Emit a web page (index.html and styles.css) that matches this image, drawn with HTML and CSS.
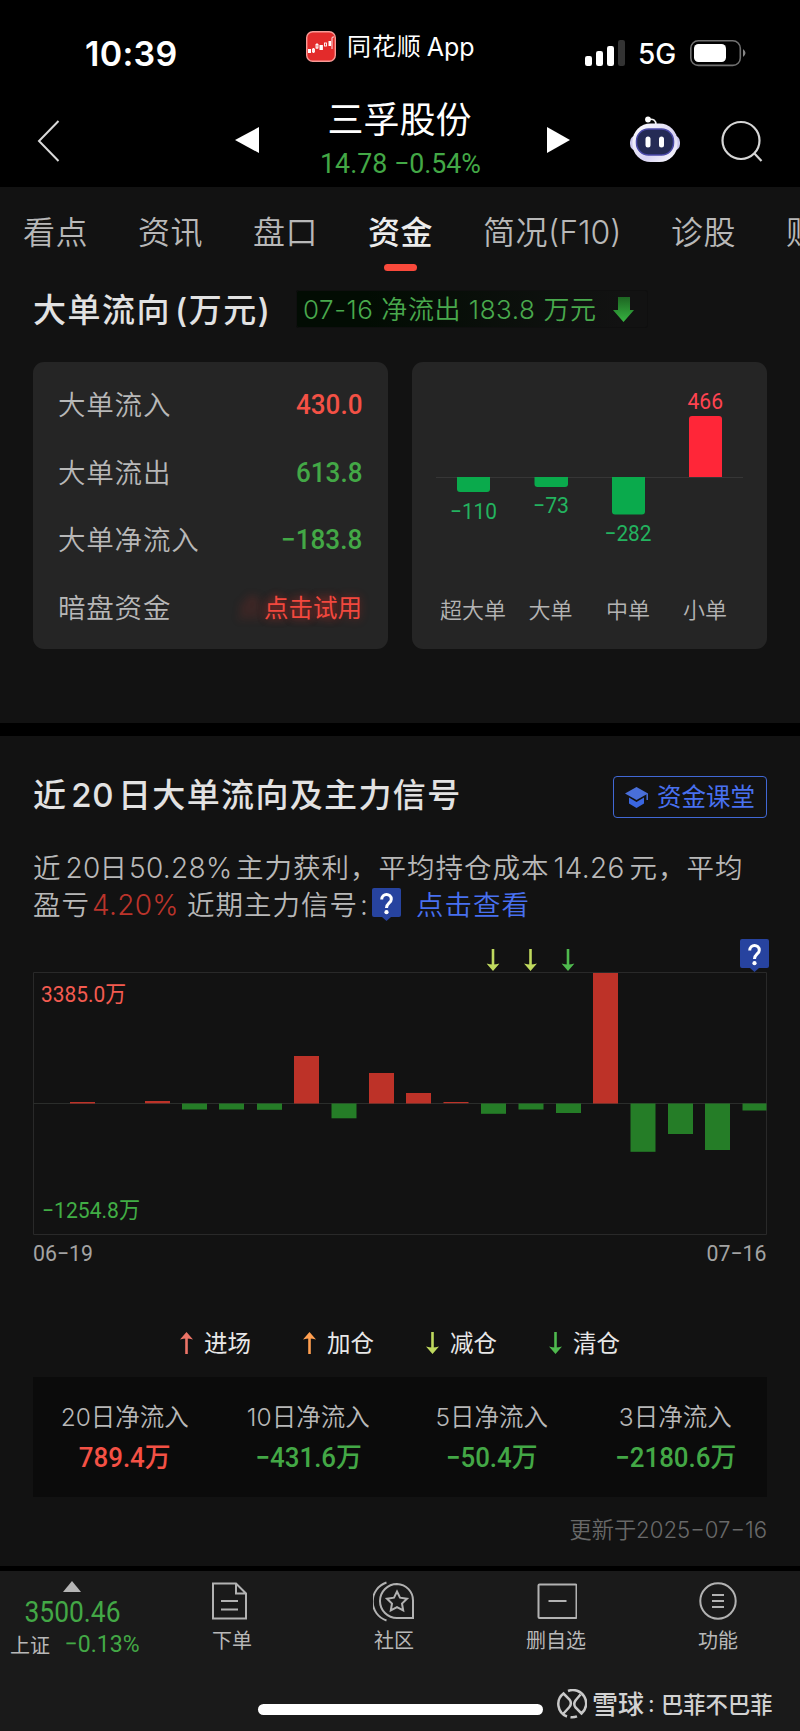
FILE: index.html
```html
<!DOCTYPE html>
<html lang="zh-CN">
<head>
<meta charset="utf-8">
<title>三孚股份</title>
<link rel="stylesheet" href="styles.css">
</head>
<body>
<svg class="defs" width="0" height="0" aria-hidden="true">
  <defs>
    <symbol id="up" viewBox="0 0 13 22"><path d="M6.500 6V22" stroke="currentColor" stroke-width="2.600"/><path d="M6.500 0 13 7.500Q6.500 5.500 0 7.500Z" fill="currentColor"/></symbol>
    <symbol id="down" viewBox="0 0 13 22"><path d="M6.500 0V16" stroke="currentColor" stroke-width="2.600"/><path d="M6.500 22 13 14.500Q6.500 16.500 0 14.500Z" fill="currentColor"/></symbol>
    <symbol id="help" viewBox="0 0 29 33"><path d="M2 0H27Q29 0 29 2V27Q29 29 27 29H19L14.500 33 10 29H2Q0 29 0 27V2Q0 0 2 0Z" fill="#27439f"/><path d="M9.700 11.500C9.700 4.800 19.300 4.800 19.300 11.200 19.300 15 14.500 15 14.500 20" fill="none" stroke="#fff" stroke-width="3"/><circle cx="14.500" cy="24.200" r="2.100" fill="#fff"/></symbol>
  </defs>
</svg>

<header class="top">
  <div class="status">
    <div class="clock">10:39</div>
    <div class="app">
      <svg width="30" height="31" viewBox="0 0 30 31"><rect x=".7" y=".7" width="28.600" height="29.600" rx="6" fill="#e32b2b" stroke="#f79a96" stroke-width="1.400"/><g fill="#fff"><rect x="2" y="18" width="3" height="4"/><rect x="13.500" y="14" width="3.400" height="5"/><rect x="22.500" y="10" width="2.600" height="5"/></g><g fill="none" stroke="#fff" stroke-width=".9"><rect x="6.500" y="18" width="2" height="3"/><rect x="10" y="13.500" width="2" height="3.500"/><rect x="18.500" y="12" width="2" height="3"/><path d="M26 18V7Q26 6 27 6H28M7.500 17V22M11 12V18"/></g></svg>
      <span class="app-name">同花顺</span><span class="app-word">App</span>
    </div>
    <svg class="signal" width="41" height="27" viewBox="0 0 41 27"><g fill="#fff"><rect y="16" width="7" height="10" rx="2.200"/><rect x="11" y="11" width="7" height="15" rx="2.200"/><rect x="22" y="6" width="7" height="20" rx="2.200"/></g><rect x="33" y="0" width="7" height="26" rx="2.200" fill="#333"/></svg>
    <span class="net">5G</span>
    <svg class="battery" width="57" height="27" viewBox="0 0 57 27"><rect x=".8" y=".8" width="49.500" height="24.600" rx="7.500" fill="none" stroke="#707070" stroke-width="1.600"/><rect x="4" y="4" width="32" height="18" rx="4.500" fill="#fff"/><path d="M53 9Q58 13 53 17Z" fill="#858585"/></svg>
  </div>
  <div class="nav">
    <svg width="23" height="42" viewBox="0 0 23 42"><path d="M21.500 1 2 21 21.500 41" fill="none" stroke="#d9d9d9" stroke-width="2"/></svg>
    <svg class="prev" width="25" height="28" viewBox="0 0 25 28"><path d="M0 14 24 1V27Z" fill="#fff"/></svg>
    <div class="stock">
      <h1>三孚股份</h1>
      <p class="num quote">14.78 −0.54%</p>
    </div>
    <svg class="next" width="25" height="28" viewBox="0 0 25 28"><path d="M24 14 1 1V27Z" fill="#fff"/></svg>
    <svg class="robot" width="50" height="48" viewBox="0 0 50 48"><defs><linearGradient id="face" x1="0" x2="1" y1="0" y2="1"><stop stop-color="#fff"/><stop offset=".6" stop-color="#d9d4f3"/><stop offset="1" stop-color="#fff"/></linearGradient></defs><path d="M18.500 4.500Q26 3 26 10" fill="none" stroke="#eee" stroke-width="1.700"/><circle cx="18" cy="4.500" r="2.900" fill="#fff"/><rect x="0" y="20" width="50" height="16" rx="7" fill="#c9c5ed"/><rect x="2.500" y="8.500" width="45" height="38.500" rx="18" fill="url(#face)"/><rect x="6.500" y="14" width="37" height="26" rx="12" fill="#252b55" stroke="#4b4aa8" stroke-width="1.500"/><rect x="15.500" y="21.500" width="5" height="11" rx="2.500" fill="#fff"/><rect x="29" y="21.500" width="5" height="11" rx="2.500" fill="#fff"/></svg>
    <svg class="search" width="42" height="42" viewBox="0 0 42 42"><circle cx="20" cy="20.500" r="18.500" fill="none" stroke="#d6d6d6" stroke-width="2.200"/><path d="M33 33 40.500 41" stroke="#d6d6d6" stroke-width="2.200"/></svg>
  </div>
</header>

<main>
  <nav class="tabs">
    <span>看点</span><span>资讯</span><span>盘口</span><span class="on">资金</span><span>简况<i>(F10)</i></span><span>诊股</span><span>财务</span>
  </nav>

  <section class="flow">
    <div class="flow-head">
      <h2>大单流向<i>(</i>万元<b>)</b></h2>
      <div class="badge"><span>07-16 净流出 183.8 万元</span>
        <svg width="21" height="25" viewBox="0 0 21 25"><defs><linearGradient id="ag" x2="0" y2="1"><stop stop-color="#1d6522"/><stop offset="1" stop-color="#37b441"/></linearGradient></defs><path d="M5 0H17V13H21L10.500 25 0 13H5Z" fill="url(#ag)"/></svg>
      </div>
    </div>
    <div class="cards">
      <dl class="card rows">
        <div><dt>大单流入</dt><dd class="num red">430.0</dd></div>
        <div><dt>大单流出</dt><dd class="num green">613.8</dd></div>
        <div><dt>大单净流入</dt><dd class="num green">−183.8</dd></div>
        <div><dt>暗盘资金</dt><dd class="trial">点击试用</dd></div>
      </dl>
      <div class="card">
        <svg class="chart" width="355" height="287" viewBox="412 362 355 287">
          <path d="M436 477.500H743" stroke="#363636"/>
          <g fill="#0aaa4c"><path d="M457 477H490V489Q490 492 487 492H460Q457 492 457 489Z"/><path d="M534.500 477H568V484Q568 487 565 487H537.500Q534.500 487 534.500 484Z"/><path d="M612 477H645V511.500Q645 514.500 642 514.500H615Q612 514.500 612 511.500Z"/></g>
          <path d="M689 477V419Q689 416 692 416H719Q722 416 722 419V477Z" fill="#ff2638"/>
          <g class="din" fill="#23b35f" font-size="22.500">
            <text x="450" y="518.500" textLength="47" lengthAdjust="spacingAndGlyphs">−110</text>
            <text x="533" y="513" textLength="36" lengthAdjust="spacingAndGlyphs">−73</text>
            <text x="604.500" y="541" textLength="47" lengthAdjust="spacingAndGlyphs">−282</text>
            <text x="687.500" y="409" textLength="35.500" lengthAdjust="spacingAndGlyphs" fill="#ff4350">466</text>
          </g>
          <g class="cjk" fill="#b4b4b4" font-size="22" text-anchor="middle"><text x="473" y="618">超大单</text><text x="550.500" y="618">大单</text><text x="628" y="618">中单</text><text x="705" y="618">小单</text></g>
        </svg>
      </div>
    </div>
  </section>

  <section class="history">
    <div class="history-head">
      <h2>近<i>20</i>日大单流向及主力信号</h2>
      <div class="course"><svg width="24" height="21" viewBox="0 0 24 21"><path d="M11.500 0 23 6.500 11.500 13 0 6.500Z" fill="#496fd9"/><path d="M4 10.500 11.500 15 19 10.500V16.500L11.500 21 4 16.500Z" fill="#3a66e0"/><path d="M22.200 6.500V13" stroke="#496fd9" stroke-width="1.500"/></svg><span>资金课堂</span></div>
    </div>
    <div class="summary">
      <p>近<i class="d20">20</i>日<i class="pct">50.28%</i>主力获利，平均持仓成本<i class="cost">14.26</i>元，平均</p>
      <p>盈亏<i class="gain">4.20%</i>近期主力信号<i class="colon">:</i><svg width="29" height="33"><use href="#help"/></svg><a>点击查看</a></p>
    </div>
    <svg class="chart" width="740" height="330" viewBox="33 936 740 330">
      <path d="M33.500 972.500H766.500V1234.500H33.500Z" fill="none" stroke="#292929"/>
      <path d="M33 1103.500H767" stroke="#2b2d2b"/>
      <g fill="#bd3228"><rect x="70" y="1102" width="25" height="1.500"/><rect x="145" y="1101" width="25" height="2.300"/><rect x="294" y="1056" width="25" height="47.500"/><rect x="369" y="1073" width="25" height="30.500"/><rect x="406" y="1093" width="25" height="10.500"/><rect x="443.500" y="1102" width="25" height="1.200"/><rect x="593" y="973" width="25" height="130.500"/></g>
      <g fill="#257d27"><rect x="182" y="1103.500" width="25" height="6"/><rect x="219" y="1103.500" width="25" height="6"/><rect x="257" y="1103.500" width="25" height="6.300"/><rect x="331.500" y="1103.500" width="25" height="14.800"/><rect x="481" y="1103.500" width="25" height="10.300"/><rect x="518.500" y="1103.500" width="25" height="6"/><rect x="556" y="1103.500" width="25" height="9.500"/><rect x="630.500" y="1103.500" width="25" height="48.300"/><rect x="668" y="1103.500" width="25" height="30.500"/><rect x="705" y="1103.500" width="25" height="46.500"/><rect x="742.500" y="1103.500" width="24" height="7"/></g>
      <use href="#down" x="486.500" y="949" width="13" height="22" color="#bfd95e"/>
      <use href="#down" x="524" y="949" width="13" height="22" color="#bfd95e"/>
      <use href="#down" x="561.500" y="949" width="13" height="22" color="#4fb94e"/>
      <use href="#help" x="740" y="939" width="29" height="33"/>
      <g class="din" font-size="22.500">
        <text x="41" y="1002" textLength="85" lengthAdjust="spacingAndGlyphs" fill="#f45b50">3385.0万</text>
        <text x="42" y="1217.500" textLength="98" lengthAdjust="spacingAndGlyphs" fill="#41ad45">−1254.8万</text>
        <g fill="#a3a3a3"><text x="33" y="1261" textLength="60" lengthAdjust="spacingAndGlyphs">06−19</text><text x="706.500" y="1261" textLength="60" lengthAdjust="spacingAndGlyphs">07−16</text></g>
      </g>
    </svg>
    <ul class="legend">
      <li><svg class="c-in" width="13" height="22"><use href="#up"/></svg>进场</li>
      <li><svg class="c-add" width="13" height="22"><use href="#up"/></svg>加仓</li>
      <li><svg class="c-cut" width="13" height="22"><use href="#down"/></svg>减仓</li>
      <li><svg class="c-out" width="13" height="22"><use href="#down"/></svg>清仓</li>
    </ul>
    <div class="totals">
      <div><p>20日净流入</p><strong class="num red">789.4万</strong></div>
      <div><p>10日净流入</p><strong class="num green">−431.6万</strong></div>
      <div><p>5日净流入</p><strong class="num green">−50.4万</strong></div>
      <div><p>3日净流入</p><strong class="num green">−2180.6万</strong></div>
    </div>
    <p class="updated">更新于2025−07−16</p>
  </section>
</main>

<footer>
  <div class="bar">
    <div class="index">
      <svg width="18" height="11" viewBox="0 0 18 11"><path d="M9 0 18 11H0Z" fill="#b5b5b5"/></svg>
      <strong class="num green">3500.46</strong>
      <p><span>上证</span><b class="num green">−0.13%</b></p>
    </div>
    <div class="act"><svg width="42" height="42" viewBox="0 0 42 42"><path d="M2 3.500H25L35 13.500V38.500H2ZM25 3.500V13.500H35M10 21H27M10 29.500H27"/></svg>下单</div>
    <div class="act"><svg width="42" height="42" viewBox="0 0 42 42"><path d="M13.500 2.500A20 20 0 0 0 13.500 40.500M24 4A16.500 16.500 0 1 0 24 38H40V21A16.500 16.500 0 0 0 24 4Z"/><path d="M24 11.500 27 17.700 34 18.700 29 23.500 30.200 30.500 24 27.200 17.800 30.500 19 23.500 14 18.700 21 17.700Z"/></svg>社区</div>
    <div class="act"><svg width="42" height="42" viewBox="0 0 42 42"><rect x="3.500" y="4.500" width="38" height="33.500" rx="1"/><path d="M13.500 21H31.500"/></svg>删自选</div>
    <div class="act"><svg width="42" height="42" viewBox="0 0 42 42"><circle cx="21" cy="21" r="17.700"/><path d="M15 15H27M15 21H27M15 27H27"/></svg>功能</div>
  </div>
  <div class="home">
    <span class="home-bar"></span>
    <svg class="mark" width="30" height="30" viewBox="0 0 30 30"><g fill="none" stroke="#c9c9c9" stroke-width="2.500"><path d="M10 27.500A13.300 13.300 0 0 1 6.500 4.500L12.500 10.500Q15.500 14.500 12 18.500L6.500 24.500M11 2A13.300 13.300 0 0 1 24.500 24.500L18.500 18.500Q16 15 18.500 11.500L23.500 5.500M20 27.400A13.300 13.300 0 0 1 13.500 28.200"/></g></svg>
    <span class="brand">雪球</span><span class="sep">:</span><span class="author">巴菲不巴菲</span>
  </div>
</footer>
</body>
</html>
```

FILE: styles.css
```css
* { box-sizing: border-box; margin: 0; padding: 0; }
body {
  width: 800px;
  height: 1731px;
  overflow: hidden;
  background: #121212;
  color: #b8b8b8;
  font-family: Inter, "Noto Sans CJK SC", sans-serif;
}
i, dt, dd { font-style: normal; }
svg { display: block; flex: none; }
.defs { position: absolute; }
.num, .din { font-family: Roboto, "Noto Sans CJK SC", sans-serif; font-weight: 500; }
.din { font-weight: 400; }
.cjk { font-family: "Noto Sans CJK SC", sans-serif; font-weight: 350; }
.red { color: #f45145; }
.green { color: #43a846; }

/* status bar and title */
.top { height: 187px; background: #000; }
.status { display: flex; height: 84px; padding: 31px 0 0 84px; color: #fff; }
.clock { width: 222px; padding: 1px 0 0 1px; font-size: 34px; font-weight: 600; line-height: 44px; letter-spacing: .3px; }
.app { display: flex; width: 279px; line-height: 32px; }
.app-name { margin-left: 11px; font-size: 24px; letter-spacing: .9px; }
.app-word { margin-left: 5px; font-size: 25px; line-height: 33px; }
.signal { margin-top: 9px; }
.net { width: 64px; padding-left: 12px; font-size: 28px; font-weight: 500; line-height: 47px; }
.battery { margin-top: 9px; }
.nav { display: flex; height: 103px; padding: 36px 0 0 37px; }
.prev { margin: 6px 0 0 175px; }
.stock { width: 286px; height: 90px; margin-top: -22px; text-align: center; color: #fff; }
.stock h1 { margin: 1px 7px 0 0; font-size: 36px; font-weight: 400; line-height: 42px; }
.quote { margin: 4px -15px 0 -20px; font-size: 28px; font-weight: 400; line-height: 37px; color: #43a846; transform: scaleX(.955); }
.next { margin-top: 6px; }
.robot { margin: -5px 0 0 59px; }
.search { margin-left: 41px; }

/* tabs */
.tabs { display: flex; gap: 50px; width: 800px; height: 84px; padding-left: 23px; overflow: hidden; font-size: 32px; line-height: 92px; font-weight: 350; letter-spacing: .5px; white-space: nowrap; }
.tabs span { display: flex; flex: none; width: 65px; }
.tabs span:nth-child(5) { width: 138px; }
.tabs i { font-size: 32px; font-weight: 300; letter-spacing: 0; }
.tabs .on { flex-direction: column; align-items: center; color: #ececec; font-weight: 500; line-height: 77px; padding-top: 7px; height: 84px; }
.tabs .on::after { content: ""; flex: none; width: 33px; height: 7px; margin-top: -7px; border-radius: 4px; background: #f9493b; }

/* order flow */
.flow { height: 452px; padding: 19px 33px 0; }
.flow-head { display: flex; gap: 25px; height: 72px; }
h2 { font-size: 33px; font-weight: 500; line-height: 40px; letter-spacing: 1.500px; white-space: nowrap; color: #e2e2e2; }
.flow-head h2 { width: 238px; }
.flow-head h2 i { margin-left: 4px; }
.flow-head h2 b { font-weight: 500; }
.badge { display: flex; width: 352px; height: 38px; padding: 7px 0 0 7px; border-radius: 3px; background: linear-gradient(90deg, #020c03 20%, #121212 92%); box-shadow: inset 0 0 0 1px #0f0f0f; color: #49a94d; }
.badge span { width: 310px; font-size: 26px; font-weight: 350; line-height: 25px; letter-spacing: .55px; white-space: nowrap; }
.cards { display: grid; grid-template-columns: 355px 355px; gap: 24px; }
.card { height: 287px; border-radius: 11px; background: #252525; }
.rows { padding: 9px 26px 0 25px; }
.rows div { display: flex; justify-content: space-between; height: 67.700px; line-height: 68px; }
dt { font-size: 27.500px; font-weight: 350; letter-spacing: .8px; }
dd.num { font-size: 28px; transform: scaleX(.93); transform-origin: right; }
.trial { font-size: 24.500px; color: #f2483e; text-shadow: 0 0 10px #ff2b2066, -26px 0 9px #c9302866; }

/* recent twenty days */
.history { height: 843px; border-top: 13px solid #000; padding: 40px 33px 0; }
.history-head { display: flex; justify-content: space-between; height: 74px; }
.history-head h2 { line-height: 38px; letter-spacing: 1.350px; }
.history-head h2 i { margin: 0 4px; letter-spacing: .5px; }
.course { display: flex; align-items: center; width: 154px; height: 42px; padding-left: 11px; border: 1px solid #4168d5; border-radius: 4px; color: #4870ef; font-size: 24.500px; line-height: 40px; }
.course span { margin-left: 8px; }
.summary { height: 86px; font-size: 27.500px; font-weight: 350; line-height: 37px; white-space: nowrap; letter-spacing: 1px; }
.summary p { display: flex; }
.summary i { flex: none; font-size: 28px; letter-spacing: .3px; }
.d20 { width: 38px; padding-left: 4px; }
.pct { width: 108px; padding-left: 1px; }
.cost { width: 80px; padding-left: 4px; }
.gain { width: 97px; padding-left: 2px; color: #bb342b; }
.colon { width: 14px; padding-left: 2px; }
.summary svg { margin-top: 1px; }
.summary a { margin-left: 15px; color: #4870ef; }
.chart { display: block; overflow: visible; }
.legend { display: flex; gap: 58.500px; height: 111px; padding: 66px 0 0 147px; list-style: none; color: #e8e8e8; font-size: 23.500px; line-height: 24px; }
.legend li { display: flex; width: 64.500px; white-space: nowrap; }
.legend svg { margin-right: 11px; }
.c-in { color: #ec7467; }
.c-add { color: #ff9f50; }
.c-cut { color: #bfd95e; }
.c-out { color: #4fb94e; }
.totals { display: grid; grid-template-columns: repeat(4, 1fr); height: 120px; padding-top: 19px; background: #0b0b0b; text-align: center; white-space: nowrap; }
.totals p { font-size: 24.500px; font-weight: 350; line-height: 42px; }
.totals strong { display: block; font-size: 27.500px; line-height: 40px; transform: scaleX(.94); }
.updated { font-size: 22.200px; line-height: 66px; text-align: right; font-weight: 350; color: #696969; }

/* bottom bar */
footer { height: 165px; border-top: 5px solid #000; background: #1a1a1a; }
.bar { display: flex; height: 110px; }
.index { width: 151px; }
.index svg { margin: 10px 0 0 63px; }
.index strong { display: block; width: 145px; text-align: center; font-size: 29px; font-weight: 400; line-height: 40px; transform: scaleX(.91); }
.index p { display: flex; height: 26px; padding-left: 10px; font-size: 20px; line-height: 28px; }
.index b { margin-left: 13px; font-size: 24px; font-weight: 400; line-height: 25px; transform: scaleX(.96); }
.act { width: 162px; padding-top: 9px; text-align: center; font-size: 20px; line-height: 39px; }
.act svg { margin: 0 auto; fill: none; stroke: #b2b2b2; stroke-width: 2; }
.home { display: flex; height: 50px; color: #d2d2d2; line-height: 47px; white-space: nowrap; }
.home-bar { width: 285px; height: 11px; margin: 23px 14px 0 258px; border-radius: 6px; background: #fff; }
.mark { margin-top: 8px; }
.brand { margin-left: 5px; font-size: 26px; font-weight: 500; }
.sep { width: 13px; margin-left: 4px; font-size: 23px; }
.author { font-size: 22.300px; font-weight: 500; }
```
